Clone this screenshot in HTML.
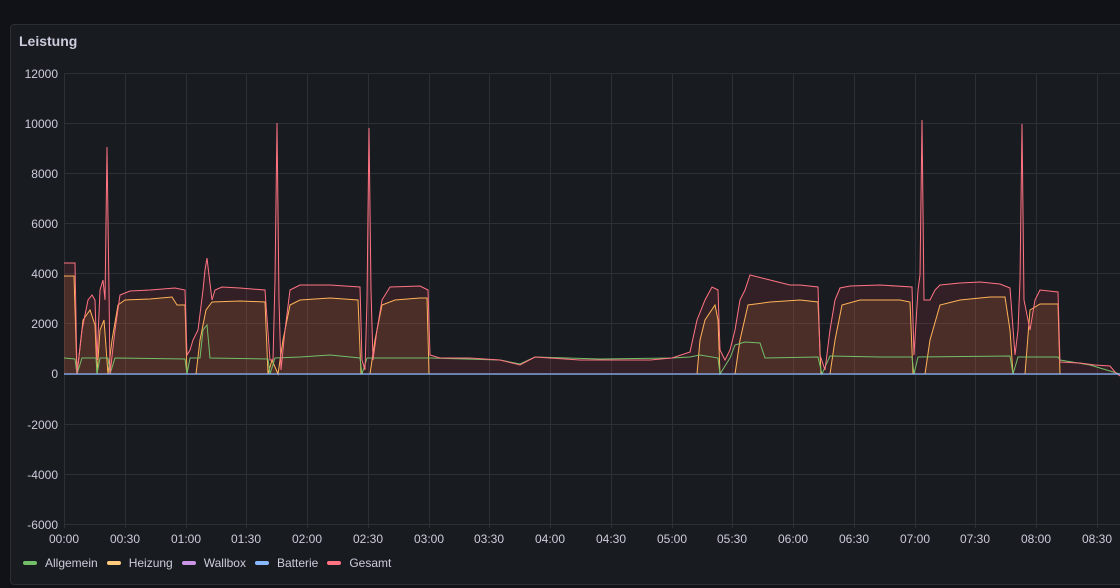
<!DOCTYPE html>
<html><head><style>
body{margin:0;width:1120px;height:588px;background:#111217;font-family:"Liberation Sans",sans-serif;overflow:hidden;position:relative}
.panel{position:absolute;left:10px;top:24px;width:1120px;height:561px;background:#181b1f;border:1px solid #2a2d33;border-radius:4px;box-sizing:border-box}
.t{position:absolute;left:19px;top:33px;color:#ccccdc;font-size:14px;font-weight:bold}
svg{position:absolute;left:0;top:0}
.lg{position:absolute;top:556px;left:23px;font-size:12px;color:#ccccdc;display:flex;gap:0}
.lg span{display:flex;align-items:center;margin-right:9px}
.lg i{display:inline-block;width:14px;height:4px;border-radius:2px;margin-right:8px}
</style></head><body>
<div class="panel"></div>
<div class="t">Leistung</div>
<svg width="1120" height="588" font-family="Liberation Sans, sans-serif" font-size="12" fill="#ccccdc">
<g stroke="#2c2f35" stroke-width="1">
<line x1="64" y1="73.5" x2="1120" y2="73.5"/><line x1="64" y1="123.5" x2="1120" y2="123.5"/><line x1="64" y1="173.5" x2="1120" y2="173.5"/><line x1="64" y1="223.5" x2="1120" y2="223.5"/><line x1="64" y1="273.5" x2="1120" y2="273.5"/><line x1="64" y1="323.5" x2="1120" y2="323.5"/><line x1="64" y1="374.5" x2="1120" y2="374.5"/><line x1="64" y1="424.5" x2="1120" y2="424.5"/><line x1="64" y1="474.5" x2="1120" y2="474.5"/><line x1="64" y1="524.5" x2="1120" y2="524.5"/>
<line x1="64.5" y1="73" x2="64.5" y2="528"/><line x1="125.5" y1="73" x2="125.5" y2="528"/><line x1="186.5" y1="73" x2="186.5" y2="528"/><line x1="246.5" y1="73" x2="246.5" y2="528"/><line x1="307.5" y1="73" x2="307.5" y2="528"/><line x1="368.5" y1="73" x2="368.5" y2="528"/><line x1="429.5" y1="73" x2="429.5" y2="528"/><line x1="489.5" y1="73" x2="489.5" y2="528"/><line x1="550.5" y1="73" x2="550.5" y2="528"/><line x1="611.5" y1="73" x2="611.5" y2="528"/><line x1="672.5" y1="73" x2="672.5" y2="528"/><line x1="732.5" y1="73" x2="732.5" y2="528"/><line x1="793.5" y1="73" x2="793.5" y2="528"/><line x1="854.5" y1="73" x2="854.5" y2="528"/><line x1="915.5" y1="73" x2="915.5" y2="528"/><line x1="975.5" y1="73" x2="975.5" y2="528"/><line x1="1036.5" y1="73" x2="1036.5" y2="528"/><line x1="1097.5" y1="73" x2="1097.5" y2="528"/>
</g>
<g text-anchor="end">
<text x="58" y="78">12000</text><text x="58" y="128">10000</text><text x="58" y="178">8000</text><text x="58" y="228">6000</text><text x="58" y="278">4000</text><text x="58" y="328">2000</text><text x="58" y="378">0</text><text x="58" y="429">-2000</text><text x="58" y="479">-4000</text><text x="58" y="529">-6000</text>
</g>
<g text-anchor="middle">
<text x="64" y="543">00:00</text><text x="125" y="543">00:30</text><text x="186" y="543">01:00</text><text x="246" y="543">01:30</text><text x="307" y="543">02:00</text><text x="368" y="543">02:30</text><text x="429" y="543">03:00</text><text x="489" y="543">03:30</text><text x="550" y="543">04:00</text><text x="611" y="543">04:30</text><text x="672" y="543">05:00</text><text x="732" y="543">05:30</text><text x="793" y="543">06:00</text><text x="854" y="543">06:30</text><text x="915" y="543">07:00</text><text x="975" y="543">07:30</text><text x="1036" y="543">08:00</text><text x="1097" y="543">08:30</text>
</g>
<polygon fill="rgba(242,73,92,0.13)" points="64,374 64,263 75,263 77,374 82,330 88,300 92,295 95,300 97,360 100,290 103,280 105,300 107,147 109,290 110,374 115,330 120,295 130,291 150,290 175,288 185,290 187,355 190,350 193,340 198,330 203,290 205,270 207,258 209,275 212,300 215,290 222,287 240,288 265,290 270,360 273,360 275,280 277,123 279,300 281,370 285,330 290,290 300,285 330,285 360,287 362,360 365,370 367,300 369,128 371,290 373,360 377,330 382,300 390,287 420,286 428,290 430,355 440,358 470,358 500,360 520,365 535,357 550,358 580,360 620,360 650,360 672,358 690,352 697,320 705,300 712,287 718,290 720,350 725,360 730,350 735,330 740,300 745,290 750,275 770,280 790,285 800,285 818,287 820,355 825,370 830,330 835,300 840,288 850,286 880,285 912,287 914,355 918,290 920,275 922,120 924,300 930,300 935,290 940,285 960,283 980,282 1000,284 1010,288 1015,355 1018,330 1020,280 1022,124 1024,300 1030,330 1035,300 1040,290 1058,292 1060,362 1080,363 1095,365 1110,366 1115,372 1120,376 1120,374"/>
<polygon fill="rgba(255,152,48,0.12)" points="64,374 64,276 74,276 77,374 83,320 90,310 95,325 97,374 100,330 104,320 108,374 112,340 118,305 125,300 150,299 172,297 177,305 185,305 187,374 196,374 200,340 206,310 212,302 240,301 265,302 268,374 272,360 278,374 283,340 290,305 300,300 330,298 358,300 361,374 370,374 375,340 382,305 395,300 420,298 427,298 429,374 697,374 700,340 705,320 715,305 718,320 720,374 735,374 740,340 748,305 770,302 800,300 818,302 821,374 830,374 835,340 842,305 860,300 900,300 910,302 913,374 925,374 930,340 940,305 960,300 990,297 1005,297 1010,330 1013,374 1025,374 1030,310 1040,304 1058,304 1060,374"/>
<polyline fill="none" stroke="#ffb357" stroke-width="1" points="64,276 74,276 77,374 83,320 90,310 95,325 97,374 100,330 104,320 108,374 112,340 118,305 125,300 150,299 172,297 177,305 185,305 187,374 196,374 200,340 206,310 212,302 240,301 265,302 268,374 272,360 278,374 283,340 290,305 300,300 330,298 358,300 361,374 370,374 375,340 382,305 395,300 420,298 427,298 429,374 697,374 700,340 705,320 715,305 718,320 720,374 735,374 740,340 748,305 770,302 800,300 818,302 821,374 830,374 835,340 842,305 860,300 900,300 910,302 913,374 925,374 930,340 940,305 960,300 990,297 1005,297 1010,330 1013,374 1025,374 1030,310 1040,304 1058,304 1060,374 1120,374"/>
<polyline fill="none" stroke="#73bf69" stroke-width="1" points="64,358 75,359 77,374 82,358 96,358 97,374 100,358 108,358 110,374 115,358 185,359 187,374 190,358 200,358 203,330 207,325 210,358 268,359 270,374 275,358 300,357 330,355 360,358 362,374 367,358 380,358 430,358 500,360 520,364 535,357 600,359 672,358 690,357 700,355 718,358 720,374 730,358 735,345 745,342 760,343 765,358 818,357 822,374 830,356 880,357 912,357 914,374 918,357 1010,356 1013,374 1018,357 1058,357 1060,360 1090,365 1120,374"/>
<polyline fill="none" stroke="#ff7383" stroke-width="1" points="64,263 75,263 77,374 82,330 88,300 92,295 95,300 97,360 100,290 103,280 105,300 107,147 109,290 110,374 115,330 120,295 130,291 150,290 175,288 185,290 187,355 190,350 193,340 198,330 203,290 205,270 207,258 209,275 212,300 215,290 222,287 240,288 265,290 270,360 273,360 275,280 277,123 279,300 281,370 285,330 290,290 300,285 330,285 360,287 362,360 365,370 367,300 369,128 371,290 373,360 377,330 382,300 390,287 420,286 428,290 430,355 440,358 470,358 500,360 520,365 535,357 550,358 580,360 620,360 650,360 672,358 690,352 697,320 705,300 712,287 718,290 720,350 725,360 730,350 735,330 740,300 745,290 750,275 770,280 790,285 800,285 818,287 820,355 825,370 830,330 835,300 840,288 850,286 880,285 912,287 914,355 918,290 920,275 922,120 924,300 930,300 935,290 940,285 960,283 980,282 1000,284 1010,288 1015,355 1018,330 1020,280 1022,124 1024,300 1030,330 1035,300 1040,290 1058,292 1060,362 1080,363 1095,365 1110,366 1115,372 1120,376"/>
<line x1="64" y1="374" x2="1120" y2="374" stroke="#8ab8ff" stroke-width="1.2"/>
</svg>
<div class="lg"><span><i style="background:#73bf69"></i>Allgemein</span><span><i style="background:#ffcb7d"></i>Heizung</span><span><i style="background:#ca95e5"></i>Wallbox</span><span><i style="background:#8ab8ff"></i>Batterie</span><span><i style="background:#ff7383"></i>Gesamt</span></div>
</body></html>
